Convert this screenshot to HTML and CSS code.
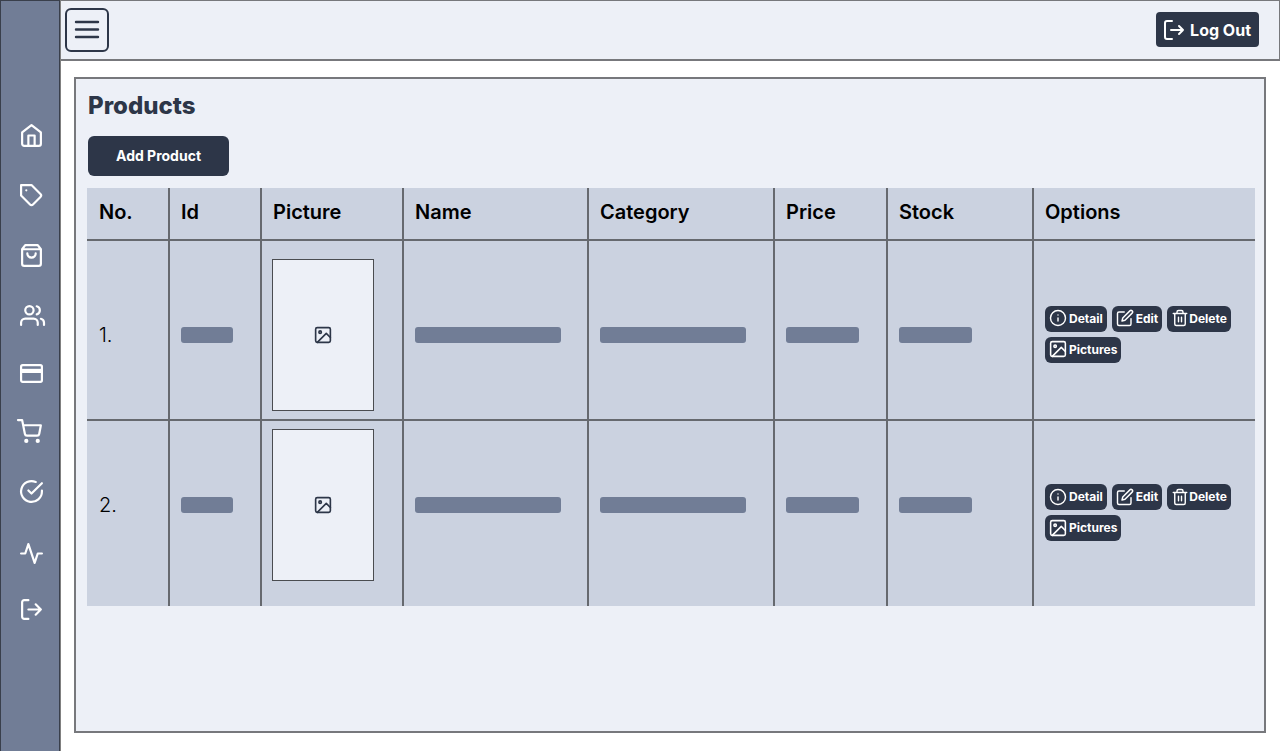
FILE: index.html
```html
<!DOCTYPE html>
<html lang="en">
<head>
<meta charset="utf-8">
<meta name="viewport" content="width=device-width, initial-scale=1">
<title>Products</title>
<link rel="stylesheet" href="styles.css">
</head>
<body>
<svg class="sprite" aria-hidden="true">
  <symbol id="i-logout" viewBox="0 0 24 24"><path d="M9 21H5a2 2 0 0 1-2-2V5a2 2 0 0 1 2-2h4M16 17l5-5-5-5M21 12H9"/></symbol>
  <symbol id="i-exit" viewBox="0 0 24 24"><path d="M10 21H5a2 2 0 0 1-2-2V5a2 2 0 0 1 2-2h5M17 8l4 4-4 4M21 12H9"/></symbol>
  <symbol id="i-image" viewBox="1 1 22 22"><rect x="3" y="3" width="18" height="18" rx="2"/><circle cx="8.5" cy="8.5" r="1.5"/><path d="M21 15l-5-5L5 21"/></symbol>
  <symbol id="i-info" viewBox="0 0 24 24"><circle cx="12" cy="12" r="10"/><path d="M12 16v-4M12 8h.01"/></symbol>
  <symbol id="i-edit" viewBox="0 0 24 24"><path d="M11 4H4a2 2 0 0 0-2 2v14a2 2 0 0 0 2 2h14a2 2 0 0 0 2-2v-7"/><path d="M18.5 2.5a2.12 2.12 0 0 1 3 3L12 15l-4 1 1-4z"/></symbol>
  <symbol id="i-trash" viewBox="0 0 24 24"><path d="M3 6h18M19 6v14a2 2 0 0 1-2 2H7a2 2 0 0 1-2-2V6M8 6V4a2 2 0 0 1 2-2h4a2 2 0 0 1 2 2v2M10 11v6M14 11v6"/></symbol>
</svg>
<div class="app">
  <nav class="sidebar" aria-label="Main">
    <a class="nav-link" href="#" aria-label="Home"><svg class="icon" viewBox="0 0 24 24"><path d="M3 9l9-7 9 7v11a2 2 0 0 1-2 2H5a2 2 0 0 1-2-2z"/><path d="M9 22V12h6v10"/></svg></a>
    <a class="nav-link" href="#" aria-label="Products"><svg class="icon" viewBox="0 0 24 24"><path d="M20.59 13.41l-7.17 7.17a2 2 0 0 1-2.83 0L2 12V2h10l8.59 8.59a2 2 0 0 1 0 2.82z"/><path d="M7 7h.01"/></svg></a>
    <a class="nav-link" href="#" aria-label="Orders"><svg class="icon" viewBox="0 0 24 24"><path d="M6 2L3 6v14a2 2 0 0 0 2 2h14a2 2 0 0 0 2-2V6l-3-4zM3 6h18M16 10a4 4 0 0 1-8 0"/></svg></a>
    <a class="nav-link" href="#" aria-label="Users"><svg class="icon" viewBox="-1 0 24 24"><path d="M17 21v-2a4 4 0 0 0-4-4H5a4 4 0 0 0-4 4v2"/><circle cx="9" cy="7" r="4"/><path d="M23 21v-2a4 4 0 0 0-3-3.87M16 3.13a4 4 0 0 1 0 7.75"/></svg></a>
    <a class="nav-link nav-link--short" href="#" aria-label="Payments"><svg class="icon" viewBox="0 0 24 24"><rect x="2" y="4" width="20" height="16" rx="1.5"/><path class="stripe" d="M2 9.5h20"/></svg></a>
    <a class="nav-link" href="#" aria-label="Cart"><svg class="icon" viewBox="2 0 24 24"><circle cx="9" cy="21" r="1"/><circle cx="20" cy="21" r="1"/><path d="M1 1h4l2.68 13.39a2 2 0 0 0 2 1.61h9.72a2 2 0 0 0 2-1.61L23 6H6"/></svg></a>
    <a class="nav-link" href="#" aria-label="Approvals"><svg class="icon" viewBox="0 0 24 24"><path d="M22 11.08V12a10 10 0 1 1-5.93-9.14"/><path d="M22 4L12 14.01l-3-3"/></svg></a>
    <a class="nav-link nav-link--tall" href="#" aria-label="Activity"><svg class="icon" viewBox="0 0 24 24"><path d="M22 12h-4l-3 9L9 3l-3 9H2"/></svg></a>
    <a class="nav-link nav-link--last" href="#" aria-label="Log out"><svg class="icon"><use href="#i-logout"/></svg></a>
  </nav>
  <div class="content">
    <header class="topbar">
      <button class="menu-btn" type="button" aria-label="Toggle menu"><svg class="icon icon--menu" viewBox="0 0 24 24"><path d="M1 4h22M1 11.5h22M1 19h22"/></svg></button>
      <button class="logout-btn" type="button"><svg class="icon"><use href="#i-exit"/></svg>Log Out</button>
    </header>
    <main class="main">
      <section class="panel">
        <div class="panel-head">
          <h1 class="title">Products</h1>
          <button class="add-btn" type="button">Add Product</button>
        </div>
        <table class="products">
          <colgroup>
            <col class="col-no"><col class="col-id"><col class="col-picture"><col class="col-name"><col class="col-category"><col class="col-price"><col class="col-stock"><col class="col-options">
          </colgroup>
          <thead>
            <tr><th>No.</th><th>Id</th><th>Picture</th><th>Name</th><th>Category</th><th>Price</th><th>Stock</th><th>Options</th></tr>
          </thead>
          <tbody>
            <tr class="row-first">
              <td>1.</td>
              <td><div class="bar bar--s"></div></td>
              <td class="cell-picture"><div class="thumb"><svg class="icon icon--thumb"><use href="#i-image"/></svg></div></td>
              <td><div class="bar bar--l"></div></td>
              <td><div class="bar bar--l"></div></td>
              <td><div class="bar bar--m"></div></td>
              <td><div class="bar bar--m"></div></td>
              <td class="cell-options"><div class="options">
                <button class="opt" type="button"><svg class="icon icon--opt"><use href="#i-info"/></svg>Detail</button>
                <button class="opt" type="button"><svg class="icon icon--opt"><use href="#i-edit"/></svg>Edit</button>
                <button class="opt opt--tight" type="button"><svg class="icon icon--opt"><use href="#i-trash"/></svg>Delete</button>
                <button class="opt" type="button"><svg class="icon icon--opt"><use href="#i-image"/></svg>Pictures</button>
              </div></td>
            </tr>
            <tr class="row-last">
              <td>2.</td>
              <td><div class="bar bar--s"></div></td>
              <td class="cell-picture"><div class="thumb"><svg class="icon icon--thumb"><use href="#i-image"/></svg></div></td>
              <td><div class="bar bar--l"></div></td>
              <td><div class="bar bar--l"></div></td>
              <td><div class="bar bar--m"></div></td>
              <td><div class="bar bar--m"></div></td>
              <td class="cell-options"><div class="options">
                <button class="opt" type="button"><svg class="icon icon--opt"><use href="#i-info"/></svg>Detail</button>
                <button class="opt" type="button"><svg class="icon icon--opt"><use href="#i-edit"/></svg>Edit</button>
                <button class="opt opt--tight" type="button"><svg class="icon icon--opt"><use href="#i-trash"/></svg>Delete</button>
                <button class="opt" type="button"><svg class="icon icon--opt"><use href="#i-image"/></svg>Pictures</button>
              </div></td>
            </tr>
          </tbody>
        </table>
      </section>
    </main>
  </div>
</div>
</body>
</html>
```
FILE: styles.css
```css
:root {
  --ink: #2d3648;
  --slate: #717d96;
  --mist: #cbd2e0;
  --pale: #edf0f7;
  --line: #66696f;
}
* { box-sizing: border-box; }
body {
  margin: 0;
  font-family: Inter, "Liberation Sans", sans-serif;
  background: #fff;
  color: #000;
}
button {
  font-family: inherit;
  font-weight: 700;
  color: #fff;
  background: var(--ink);
  border: 0;
  padding: 0;
  cursor: pointer;
}
.sprite { display: none; }
.icon {
  display: block;
  flex: none;
  width: 24px;
  height: 24px;
  overflow: visible;
  fill: none;
  stroke: currentColor;
  stroke-width: 2;
  stroke-linecap: round;
  stroke-linejoin: round;
}
.icon--menu { stroke-width: 2.4; }
.app { display: flex; min-height: 100vh; }

.sidebar {
  flex: none;
  width: 60px;
  padding: 104px 0 24px 2px;
  background: var(--slate);
  border: 1px solid #393f4b;
  border-bottom: 0;
}
.nav-link {
  display: flex;
  align-items: center;
  justify-content: center;
  height: 60px;
  color: #fff;
}
.nav-link .icon { width: 25px; height: 25px; stroke-width: 2.1; }
.nav-link--short { height: 56px; }
.nav-link--tall { height: 64px; }
.nav-link--last { height: 48px; }
.stripe { stroke-width: 4; stroke-linecap: butt; }

.content {
  flex: 1;
  min-width: 0;
  display: flex;
  flex-direction: column;
  border-left: 1px solid #808080;
}
.topbar {
  display: flex;
  align-items: flex-start;
  justify-content: space-between;
  padding: 7px 20px 7px 4px;
  background: var(--pale);
  border: 1px solid #77787c;
  border-width: 1px 1px 2px 0;
}
.menu-btn {
  display: grid;
  place-items: center;
  width: 44px;
  height: 44px;
  color: var(--ink);
  background: transparent;
  border: 2px solid var(--ink);
  border-radius: 6px;
}
.logout-btn {
  display: flex;
  align-items: center;
  gap: 4px;
  height: 35px;
  margin-top: 4px;
  padding: 0 8px 0 6px;
  font-size: 16px;
  border-radius: 4px;
}

.main {
  flex: 1;
  display: flex;
  padding: 16px 14px 18px 13px;
}
.panel {
  flex: 1;
  min-width: 0;
  padding: 9px;
  padding-left: 11px;
  background: var(--pale);
  border: 2px solid #77787c;
}
.panel-head { padding: 0 1px 12px; }
.title {
  margin: 0 0 12px;
  font-size: 24px;
  font-weight: 800;
  line-height: 36px;
  color: var(--ink);
}
.add-btn {
  display: block;
  height: 40px;
  padding: 0 28px 1px;
  font-size: 14px;
  border-radius: 6px;
}

.products {
  width: 100%;
  table-layout: fixed;
  border-spacing: 0;
  background: var(--mist);
  font-size: 20px;
  font-weight: 300;
  line-height: 24px;
}
.col-no { width: 83px; }
.col-id { width: 92px; }
.col-picture { width: 142px; }
.col-name { width: 185px; }
.col-category { width: 186px; }
.col-price { width: 113px; }
.col-stock { width: 146px; }
.col-options { width: 221px; }
.products th,
.products td {
  padding: 0 0 0 11px;
  text-align: left;
  vertical-align: middle;
  border-right: 2px solid var(--line);
}
.products th {
  height: 53px;
  padding-bottom: 4px;
  font-weight: 600;
}
.products th,
.row-first td { border-bottom: 2px solid var(--line); }
.products th:first-child,
.products td:first-child { padding-left: 12px; }
.products th:last-child,
.products td:last-child { border-right: 0; }
.products .row-first td { padding-top: 18px; padding-bottom: 8px; }
.products .row-last td { padding-top: 8px; padding-bottom: 25px; }
.products .row-first .cell-options,
.products .row-last .cell-options { padding-bottom: 10px; }
.products .cell-picture { padding-left: 10px; }

.bar { max-width: 100%; height: 16px; background: var(--slate); border-radius: 3px; }
.bar--s { width: 52px; }
.bar--m { width: 73px; }
.bar--l { width: 146px; }
.thumb {
  display: grid;
  place-items: center;
  width: 102px;
  height: 152px;
  color: var(--ink);
  background: var(--pale);
  border: 1px solid #4a4c50;
}
.icon--thumb { width: 18px; height: 18px; }

.options { display: flex; flex-wrap: wrap; gap: 5px; }
.opt {
  display: flex;
  align-items: center;
  gap: 2px;
  height: 26px;
  padding: 0 4px 1px;
  font-size: 12px;
  border-radius: 6px;
}
.opt--tight { gap: 0; }
.icon--opt { width: 18px; height: 18px; stroke-width: 1.9; }
```
